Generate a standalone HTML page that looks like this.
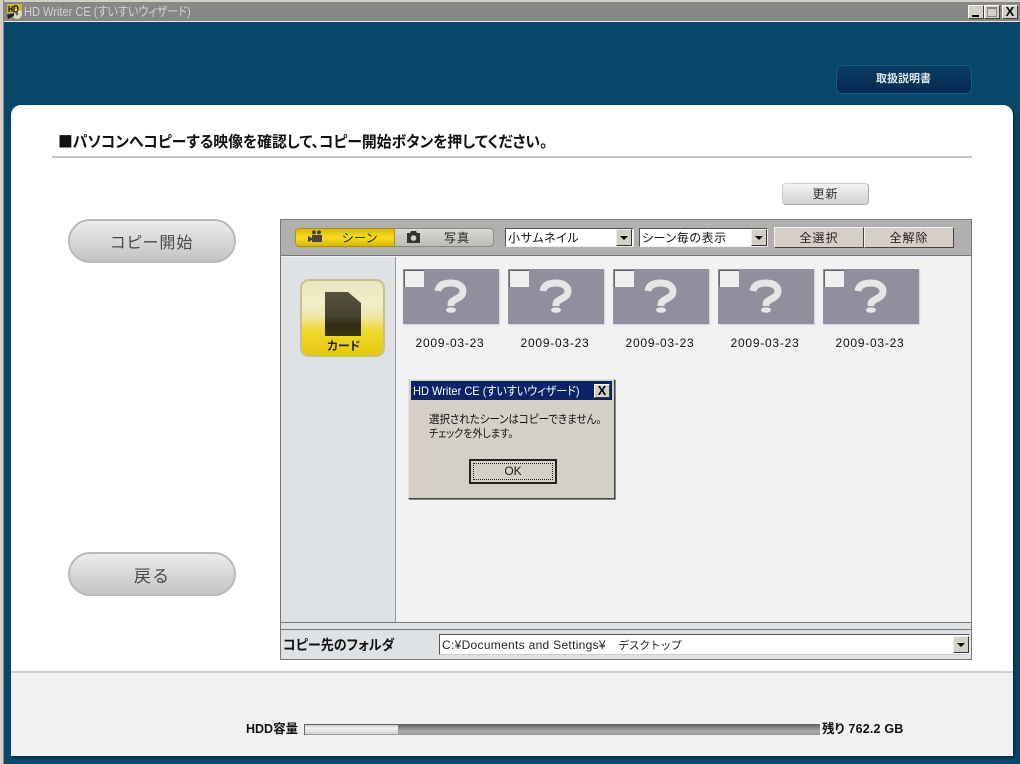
<!DOCTYPE html>
<html lang="ja"><head><meta charset="utf-8"><title>HD Writer CE</title>
<style>
*{box-sizing:border-box}
html,body{margin:0;padding:0;width:1020px;height:764px;overflow:hidden;background:#07476a;font-family:"Liberation Sans","Noto Sans CJK JP",sans-serif;color:#000;font-feature-settings:"palt"}
.a{position:absolute}
.t{position:absolute;white-space:nowrap;line-height:1;transform-origin:left top}
.win{border:1px solid;border-color:#fff #404040 #404040 #fff;background:#d4d0c8}
.pill{position:absolute;left:68px;width:168px;height:44px;border-radius:22px;border:2px solid #b9b9b9;background:linear-gradient(#ebebeb,#c4c4c6);color:#4a4a4a;font-size:16px;text-align:center;line-height:41px;letter-spacing:1px;font-family:"Noto Sans CJK JP",sans-serif}
.btn{position:absolute;top:227px;height:21px;background:#d4d0c8;border:1px solid;border-color:#f2f2f2 #444 #444 #f2f2f2;font-size:12px;text-align:center;line-height:20px;color:#222;letter-spacing:1px}
.sel{position:absolute;background:#fff;border:1px solid;border-color:#555 #eee #eee #555;font-size:12px;line-height:18px;padding-left:2px;color:#111;white-space:nowrap;letter-spacing:.6px}
.arr{position:absolute;width:16px;background:#d4d0c8;border:1px solid;border-color:#eee #333 #333 #eee}
.arr:after{content:"";position:absolute;left:3px;top:6px;border:4px solid transparent;border-top:4px solid #000;border-bottom:0}
.th{position:absolute;top:269px;width:96px;height:55px;background:#918f9d;box-shadow:1px 1px 1px #d2d2d2}
.th i{position:absolute;left:1px;top:1px;width:20px;height:17px;background:#efefef;border-left:1px solid #666;border-top:1px solid #666}
.th svg{position:absolute;left:0;top:0}
.d{position:absolute;top:337px;width:96px;text-align:center;font:12px/13px "Liberation Sans",sans-serif;letter-spacing:.75px;color:#111}
</style></head><body>

<div class="a" style="left:0;top:0;width:1020px;height:22px;background:#878785;border-top:2px solid #d4d0c8;border-bottom:1px solid #e8e8e8"></div>
<div class="a" style="left:0;top:0;width:4px;height:764px;background:#d4d0c8;border-right:1px solid #888"></div>
<svg class="a" style="left:6px;top:3px" width="17" height="17" viewBox="0 0 17 17">
<rect x="1" y="1" width="15" height="9" fill="#d9b528"/><circle cx="11" cy="11" r="5" fill="#e4dcb8"/><circle cx="11" cy="11" r="1.4" fill="#665"/><path d="M1 12l7-2v3l-6 3z" fill="#222"/>
<path d="M3 3v6M6 3v6M3 6h3M8 3v6h3q2-3 0-6z" stroke="#111" stroke-width="1.2" fill="none"/></svg>
<div class="t" style="left:24px;top:5px;font-size:13px;color:#d2d2d2;transform:scaleX(.85)">HD Writer CE (すいすいウィザード)</div>
<div class="a win" style="left:968px;top:5px;width:16px;height:14px"><div class="a" style="left:3px;top:9px;width:7px;height:2px;background:#000"></div></div>
<div class="a win" style="left:984px;top:5px;width:16px;height:14px"><div class="a" style="left:2px;top:1px;width:10px;height:10px;border:1px solid #888;border-top-width:2px"></div></div>
<div class="a win" style="left:1002px;top:5px;width:16px;height:14px;font:bold 13px/12px 'Liberation Sans',sans-serif;text-align:center">X</div>

<div class="a" style="left:836px;top:65px;width:136px;height:29px;border-radius:6px;background:linear-gradient(#0a3d64,#052a52);border:1px solid #1d5a7c"></div>
<div class="t" style="left:876px;top:74px;font-size:11px;font-weight:bold;color:#dfe6ec">取扱説明書</div>

<div class="a" style="left:11px;top:105px;width:1002px;height:651px;background:#fff;border-radius:10px 10px 0 0;box-shadow:2px 2px 2px #03304c"></div>
<div class="t" style="left:58px;top:134px;font-size:15.5px;font-weight:bold;color:#111;font-family:'Noto Sans CJK JP',sans-serif;transform:scaleX(.956)">■パソコンへコピーする映像を確認して、コピー開始ボタンを押してください。</div>
<div class="a" style="left:52px;top:156px;width:920px;height:2px;background:#c4c4c4"></div>

<div class="a" style="left:782px;top:183px;width:87px;height:22px;border-radius:4px;background:linear-gradient(#f4f4f4,#d2d2d2);border:1px solid #d0d0d0;border-right-color:#aaa;border-bottom-color:#aaa;font-size:12px;text-align:center;line-height:21px;color:#333;letter-spacing:1px">更新</div>

<div class="pill" style="top:219px">コピー開始</div>
<div class="pill" style="top:552px;font-size:17px;letter-spacing:2px">戻る</div>

<!-- main panel -->
<div class="a" style="left:280px;top:219px;width:692px;height:441px;background:#f2f2f2;border:1px solid #777"></div>
<div class="a" style="left:281px;top:220px;width:690px;height:36px;background:#b0b0ae;border-bottom:1px solid #777"></div>
<div class="a" style="left:281px;top:257px;width:115px;height:365px;background:#dfe2e4;border-right:1px solid #9a9a9a"></div>
<div class="a" style="left:281px;top:622px;width:690px;height:8px;background:#dfe2e4;border-top:1px solid #777;border-bottom:1px solid #777"></div>
<div class="a" style="left:281px;top:630px;width:690px;height:29px;background:#dfe2e4"></div>

<!-- toggle -->
<div class="a" style="left:295px;top:228px;width:100px;height:19px;border-radius:4px 0 0 4px;background:linear-gradient(#d9b80f,#f6dd20 50%,#d8b60c);border:1px solid #a69220"></div>
<div class="a" style="left:395px;top:228px;width:99px;height:19px;border-radius:0 4px 4px 0;background:linear-gradient(#d8d8d4,#bdbcb6);border:1px solid #8a8a86;border-left:0"></div>
<svg class="a" style="left:308px;top:230px" width="15" height="13" viewBox="0 0 15 13"><circle cx="6" cy="2.4" r="2" fill="#444"/><circle cx="11" cy="2.4" r="2" fill="#444"/><rect x="4" y="5" width="10" height="7" fill="#444"/><path d="M0 6l4 2v2l-4 2z" fill="#444"/></svg>
<svg class="a" style="left:406px;top:231px" width="15" height="13" viewBox="0 0 15 13"><path d="M1 2h3l1-2h5l1 2h3v10H1z" fill="#333"/><circle cx="7.5" cy="7" r="2.8" fill="#cfcfca"/></svg>
<div class="t" style="left:342px;top:232px;font-size:12px;color:#222;letter-spacing:1px">シーン</div>
<div class="t" style="left:444px;top:232px;font-size:12px;color:#222;letter-spacing:1px">写真</div>

<div class="sel" style="left:505px;top:228px;width:129px;height:19px">小サムネイル</div><div class="arr" style="left:616px;top:229px;height:17px"></div>
<div class="sel" style="left:639px;top:228px;width:129px;height:19px">シーン毎の表示</div><div class="arr" style="left:751px;top:229px;height:17px"></div>
<div class="btn" style="left:774px;width:90px">全選択</div>
<div class="btn" style="left:864px;width:90px">全解除</div>

<!-- card -->
<div class="a" style="left:300px;top:279px;width:85px;height:78px;border-radius:9px;background:linear-gradient(#e9e6bf,#f1eeca 30%,#efe7a8 48%,#eed92c 68%,#e6c90f);border:2px solid #c9c08a"></div>
<svg class="a" style="left:324px;top:291px" width="38" height="46" viewBox="0 0 38 46"><defs><linearGradient id="g" x1="0" y1="0" x2="0" y2="1"><stop offset="0" stop-color="#56523f"/><stop offset=".55" stop-color="#474331"/><stop offset=".75" stop-color="#2f2c12"/><stop offset="1" stop-color="#38351a"/></linearGradient></defs><path d="M1 1H24L37 12V45H1z" fill="url(#g)"/></svg>
<div class="t" style="left:327px;top:340px;font-size:12px;font-weight:bold;color:#2a2a10">カード</div>

<!-- thumbs -->
<div class="th" style="left:403px"><svg width="96" height="55"><path d="M35 22C36 15 43 14 48 14C56 14 60 18 60 22C60 28 54 29 50 32C48 33 48 35 48 37" fill="none" stroke="#e6e6e6" stroke-width="7"/><ellipse cx="48" cy="41" rx="5" ry="2.8" fill="#e6e6e6"/></svg><i></i></div>
<div class="th" style="left:508px"><svg width="96" height="55"><path d="M35 22C36 15 43 14 48 14C56 14 60 18 60 22C60 28 54 29 50 32C48 33 48 35 48 37" fill="none" stroke="#e6e6e6" stroke-width="7"/><ellipse cx="48" cy="41" rx="5" ry="2.8" fill="#e6e6e6"/></svg><i></i></div>
<div class="th" style="left:613px"><svg width="96" height="55"><path d="M35 22C36 15 43 14 48 14C56 14 60 18 60 22C60 28 54 29 50 32C48 33 48 35 48 37" fill="none" stroke="#e6e6e6" stroke-width="7"/><ellipse cx="48" cy="41" rx="5" ry="2.8" fill="#e6e6e6"/></svg><i></i></div>
<div class="th" style="left:718px"><svg width="96" height="55"><path d="M35 22C36 15 43 14 48 14C56 14 60 18 60 22C60 28 54 29 50 32C48 33 48 35 48 37" fill="none" stroke="#e6e6e6" stroke-width="7"/><ellipse cx="48" cy="41" rx="5" ry="2.8" fill="#e6e6e6"/></svg><i></i></div>
<div class="th" style="left:823px"><svg width="96" height="55"><path d="M35 22C36 15 43 14 48 14C56 14 60 18 60 22C60 28 54 29 50 32C48 33 48 35 48 37" fill="none" stroke="#e6e6e6" stroke-width="7"/><ellipse cx="48" cy="41" rx="5" ry="2.8" fill="#e6e6e6"/></svg><i></i></div>
<div class="d" style="left:402px">2009-03-23</div>
<div class="d" style="left:507px">2009-03-23</div>
<div class="d" style="left:612px">2009-03-23</div>
<div class="d" style="left:717px">2009-03-23</div>
<div class="d" style="left:822px">2009-03-23</div>

<!-- dialog -->
<div class="a" style="left:408px;top:379px;width:207px;height:120px;background:#d4d0c8;border:1px solid;border-color:#e4e2dc #444 #444 #e4e2dc;box-shadow:1px 1px 0 #888"></div>
<div class="a" style="left:411px;top:381px;width:201px;height:19px;background:#0a246a"></div>
<div class="t" style="left:413px;top:385px;font-size:12px;color:#fff;transform:scaleX(.92)">HD Writer CE (すいすいウィザード)</div>
<div class="a win" style="left:594px;top:384px;width:16px;height:14px;font:bold 13px/12px 'Liberation Sans',sans-serif;text-align:center">X</div>
<div class="t" style="left:429px;top:415px;font-size:11.5px;color:#111;transform:scaleX(.91)">選択されたシーンはコピーできません。</div>
<div class="t" style="left:429px;top:429px;font-size:11px;color:#111;transform:scaleX(.91)">チェックを外します。</div>
<div class="a" style="left:469px;top:459px;width:88px;height:25px;background:#d4d0c8;border:2px solid #222;font-size:12px;text-align:center;line-height:21px;color:#222"><div class="a" style="left:2px;top:2px;right:2px;bottom:2px;border:1px dotted #222"></div>OK</div>

<!-- folder -->
<div class="t" style="left:283px;top:638px;font-size:14px;font-weight:bold;color:#111;transform:scaleX(.93)">コピー先のフォルダ</div>
<div class="a" style="left:439px;top:634px;width:531px;height:21px;background:#fff;border:1px solid;border-color:#555 #eee #ccc #555;font:12px/20px 'Liberation Sans','Noto Sans CJK JP',sans-serif;padding-left:2px;color:#222;white-space:nowrap;letter-spacing:.3px">C:¥Documents and Settings¥　<span style="font-size:11px;letter-spacing:-.5px">デスクトップ</span></div>
<div class="arr" style="left:953px;top:636px;height:17px"></div>

<!-- footer -->
<div class="a" style="left:11px;top:671px;width:1002px;height:85px;background:#f1f1f1;border-top:2px solid #cfcfcf"></div>
<div class="t" style="left:246px;top:723px;font-size:12.5px;font-weight:bold;color:#111">HDD容量</div>
<div class="a" style="left:304px;top:724px;width:516px;height:11px;background:linear-gradient(#5c5c5c,#8e8e8e 40%,#aaa 70%,#9a9a9a);border-left:1px solid #666"></div>
<div class="a" style="left:305px;top:725px;width:93px;height:9px;background:linear-gradient(#c9c9c9,#f2f2f2 35%,#d2d2d2)"></div>
<div class="t" style="left:822px;top:723px;font-size:12.5px;font-weight:bold;color:#111;letter-spacing:.2px">残り 762.2 GB</div>
</body></html>
